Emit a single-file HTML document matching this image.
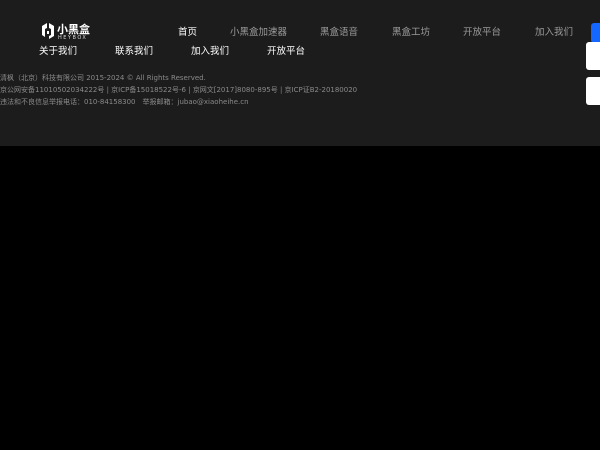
<!DOCTYPE html>
<html><head><meta charset="utf-8"><style>
body{margin:0;width:600px;height:450px;background:#000;overflow:hidden;font-family:"DejaVu Sans","Noto Sans CJK SC",sans-serif;position:relative}
.panel{position:absolute;left:0;top:0;width:600px;height:146px;background:#1c1c1c}
.t{position:absolute;white-space:nowrap}
.nav{top:24px;font-size:9.5px;color:#9a9a9a}
.nav.w{color:#fff}
.r2{top:43px;font-size:9.5px;color:#fff}
.f{font-size:7px;color:#8a8a8a;left:0}
</style></head><body>
<div class="panel"></div>
<svg class="t" style="left:40px;top:22px" width="16" height="18" viewBox="0 0 16 18"><path d="M2 4 L7 1 V6 L5 7 V15 L2 13 Z M14 4 L9 1 V6 L11 7 V13 L9 14 V17 L14 14 Z M7 9 H9 V12 H7Z" fill="#fff"/></svg>
<div class="t" style="left:57px;top:21px;font-size:11px;color:#fff;font-weight:bold">小黑盒</div>
<div class="t" style="left:58px;top:35px;font-size:5px;color:#ddd;letter-spacing:1.5px">HEYBOX</div>
<div class="t nav w" style="left:178px">首页</div>
<div class="t nav" style="left:230px">小黑盒加速器</div>
<div class="t nav" style="left:320px">黑盒语音</div>
<div class="t nav" style="left:392px">黑盒工坊</div>
<div class="t nav" style="left:463px">开放平台</div>
<div class="t nav" style="left:535px">加入我们</div>
<div class="t r2" style="left:39px">关于我们</div>
<div class="t r2" style="left:115px">联系我们</div>
<div class="t r2" style="left:191px">加入我们</div>
<div class="t r2" style="left:267px">开放平台</div>
<div class="t f" style="top:73px">清枫（北京）科技有限公司 2015-2024 © All Rights Reserved.</div>
<div class="t f" style="top:85px">京公网安备11010502034222号 | 京ICP备15018522号-6 | 京网文[2017]8080-895号 | 京ICP证B2-20180020</div>
<div class="t f" style="top:97px">违法和不良信息举报电话：010-84158300　举报邮箱：jubao@xiaoheihe.cn</div>
<div class="t" style="left:591px;top:23px;width:14px;height:20px;background:#1467ff;border-radius:3px"></div>
<div class="t" style="left:586px;top:42px;width:20px;height:28px;background:#fff;border-radius:3px"></div>
<div class="t" style="left:586px;top:77px;width:20px;height:28px;background:#fff;border-radius:3px"></div>
</body></html>
